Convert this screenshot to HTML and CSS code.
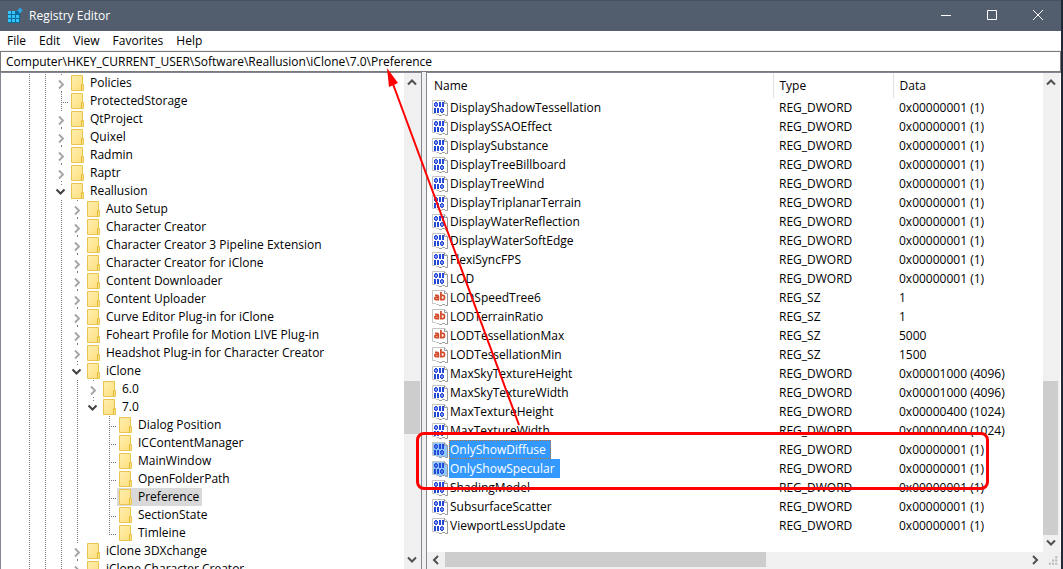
FILE: index.html
```html
<!DOCTYPE html>
<html lang="en">
<head>
<meta charset="utf-8">
<title>Registry Editor</title>
<link rel="stylesheet" href="styles.css">
</head>
<body>
<svg class="defs" aria-hidden="true">
  <defs>
    <linearGradient id="fold" x1="0" y1="0" x2="1" y2="1"><stop offset="0" stop-color="#ffeeb0"/><stop offset="1" stop-color="#fddf7c"/></linearGradient>
    <symbol id="folder" viewBox="0 0 13 16"><path d="M.5.5h11v9h1v6H.5z" fill="url(#fold)" stroke="#ebc44d"/><path d="M10.500 15V9.500h1.500" fill="none" stroke="#e2b93c"/></symbol>
    <symbol id="right" viewBox="0 0 16 18"><path d="M6 6.500l4 4-4 4" fill="none" stroke="#a3a3a3" stroke-width="1.800"/><path d="M8 0h1v1H8zM8 17h1v1H8z" fill="#777"/></symbol>
    <symbol id="down" viewBox="0 0 16 18"><path d="M3.500 7.500l4 4 4-4" fill="none" stroke="#404040" stroke-width="2"/><path d="M8 2h1v1H8z" fill="#777"/></symbol>
    <symbol id="page" viewBox="0 0 16 16"><path class="sheet" d="M.5.5h12l3 3v12h-2l-1-1h-2l-1 1h-2l-1-1h-2l-1-1h-3z" stroke="#c4c4c4"/><path d="M12.500.5v3h3M15.500 4v11.500h-2l-1-1h-2l-1 1h-2l-1-1" fill="none" stroke="#999"/></symbol>
    <symbol id="bin" viewBox="0 0 16 16"><use href="#page"/><path d="M3 3h2v1h1v3H5v1H3V7H2V4h1zM3.500 4.500v2h1v-2zM9 9h2v1h1v3h-1v1H9v-1H8v-3h1zM9.500 10.500v2h1v-2z" transform="translate(0 -1)" fill="#2448d8" fill-rule="evenodd"/><path d="M7 2h2v5H7zM10 2h2v5h-2zM2 8h2v5H2zM5 8h2v5H5z" fill="#2448d8"/></symbol>
    <symbol id="str" viewBox="0 0 16 16"><use href="#page"/><g fill="none" stroke="#d3492a" stroke-width="1.700"><path d="M3 5.300h2.200q1.200 0 1.200 1.200V10.500M6.400 7.300H4q-1.200 0-1.200 1.200T4 9.700h2.400M8.900 2v8.500M8.900 5.300h2q1.600 0 1.600 2.200t-1.600 2.200h-2"/></g></symbol>
    <symbol id="up-s" viewBox="0 0 16 16"><path d="M4 9.500L8 5.500l4 4" fill="none" stroke="#505050" stroke-width="2"/></symbol>
    <symbol id="down-s" viewBox="0 0 16 16"><path d="M4 5.500l4 4 4-4" fill="none" stroke="#505050" stroke-width="2"/></symbol>
    <symbol id="left-s" viewBox="0 0 16 16"><path d="M10 4L6 8l4 4" fill="none" stroke="#505050" stroke-width="2"/></symbol>
    <symbol id="right-s" viewBox="0 0 16 16"><path d="M6 4l4 4-4 4" fill="none" stroke="#505050" stroke-width="2"/></symbol>
  </defs>
</svg>
<div class="window">
  <header class="titlebar">
    <svg class="app-icon" viewBox="0 0 16 16" aria-hidden="true"><path d="M1 3h12v12H1z" fill="#0a6c9c"/><g fill="#35c4f7"><path d="M1 3h3v3H1zM5 3h3v3H5zM1 7h3v3H1zM5 7h3v3H5zM9 7h3v3H9zM1 11h3v3H1zM5 11h3v3H5zM9 11h3v3H9z"/><path d="M12 0h2v5h-2zM10.500 1.500h5v2h-5z" fill="#2aa5e0"/></g></svg>
    <h1 class="title">Registry Editor</h1>
    <button class="caption" aria-label="Minimize"><svg viewBox="0 0 12 12"><path d="M1 5.500h10"/></svg></button>
    <button class="caption" aria-label="Maximize"><svg viewBox="0 0 12 12"><path d="M1.500 .5h9v9h-9z"/></svg></button>
    <button class="caption" aria-label="Close"><svg viewBox="0 0 12 12"><path d="M1 0l10 10M11 0L1 10"/></svg></button>
  </header>
  <nav class="menubar"><button>File</button><button>Edit</button><button>View</button><button>Favorites</button><button>Help</button></nav>
  <input class="address" type="text" aria-label="Address" value="Computer\HKEY_CURRENT_USER\Software\Reallusion\iClone\7.0\Preference">
  <main class="panes">
    <section class="tree-pane">
      <ul class="tree">
        <li><i class="g"></i><i class="g"></i><button aria-label="Expand"><svg><use href="#right"/></svg></button><span class="key"><svg><use href="#folder"/></svg>Policies</span></li>
        <li><i class="g"></i><i class="g"></i><i class="g elbow"></i><span class="key"><svg><use href="#folder"/></svg>ProtectedStorage</span></li>
        <li><i class="g"></i><i class="g"></i><button aria-label="Expand"><svg><use href="#right"/></svg></button><span class="key"><svg><use href="#folder"/></svg>QtProject</span></li>
        <li><i class="g"></i><i class="g"></i><button aria-label="Expand"><svg><use href="#right"/></svg></button><span class="key"><svg><use href="#folder"/></svg>Quixel</span></li>
        <li><i class="g"></i><i class="g"></i><button aria-label="Expand"><svg><use href="#right"/></svg></button><span class="key"><svg><use href="#folder"/></svg>Radmin</span></li>
        <li><i class="g"></i><i class="g"></i><button aria-label="Expand"><svg><use href="#right"/></svg></button><span class="key"><svg><use href="#folder"/></svg>Raptr</span></li>
        <li><i class="g"></i><i class="g"></i><button aria-label="Collapse"><svg><use href="#down"/></svg></button><span class="key"><svg><use href="#folder"/></svg>Reallusion</span></li>
        <li><i class="g"></i><i class="g"></i><i class="g"></i><button aria-label="Expand"><svg><use href="#right"/></svg></button><span class="key"><svg><use href="#folder"/></svg>Auto Setup</span></li>
        <li><i class="g"></i><i class="g"></i><i class="g"></i><button aria-label="Expand"><svg><use href="#right"/></svg></button><span class="key"><svg><use href="#folder"/></svg>Character Creator</span></li>
        <li><i class="g"></i><i class="g"></i><i class="g"></i><button aria-label="Expand"><svg><use href="#right"/></svg></button><span class="key"><svg><use href="#folder"/></svg>Character Creator 3 Pipeline Extension</span></li>
        <li><i class="g"></i><i class="g"></i><i class="g"></i><button aria-label="Expand"><svg><use href="#right"/></svg></button><span class="key"><svg><use href="#folder"/></svg>Character Creator for iClone</span></li>
        <li><i class="g"></i><i class="g"></i><i class="g"></i><button aria-label="Expand"><svg><use href="#right"/></svg></button><span class="key"><svg><use href="#folder"/></svg>Content Downloader</span></li>
        <li><i class="g"></i><i class="g"></i><i class="g"></i><button aria-label="Expand"><svg><use href="#right"/></svg></button><span class="key"><svg><use href="#folder"/></svg>Content Uploader</span></li>
        <li><i class="g"></i><i class="g"></i><i class="g"></i><button aria-label="Expand"><svg><use href="#right"/></svg></button><span class="key"><svg><use href="#folder"/></svg>Curve Editor Plug-in for iClone</span></li>
        <li><i class="g"></i><i class="g"></i><i class="g"></i><button aria-label="Expand"><svg><use href="#right"/></svg></button><span class="key"><svg><use href="#folder"/></svg>Foheart Profile for Motion LIVE Plug-in</span></li>
        <li><i class="g"></i><i class="g"></i><i class="g"></i><button aria-label="Expand"><svg><use href="#right"/></svg></button><span class="key"><svg><use href="#folder"/></svg>Headshot Plug-in for Character Creator</span></li>
        <li><i class="g"></i><i class="g"></i><i class="g"></i><button aria-label="Collapse"><svg><use href="#down"/></svg></button><span class="key"><svg><use href="#folder"/></svg>iClone</span></li>
        <li><i class="g"></i><i class="g"></i><i class="g"></i><i class="g"></i><button aria-label="Expand"><svg><use href="#right"/></svg></button><span class="key"><svg><use href="#folder"/></svg>6.0</span></li>
        <li><i class="g"></i><i class="g"></i><i class="g"></i><i class="g"></i><button aria-label="Collapse"><svg><use href="#down"/></svg></button><span class="key"><svg><use href="#folder"/></svg>7.0</span></li>
        <li><i class="g"></i><i class="g"></i><i class="g"></i><i class="g"></i><i class="blank"></i><i class="g elbow"></i><span class="key"><svg><use href="#folder"/></svg>Dialog Position</span></li>
        <li><i class="g"></i><i class="g"></i><i class="g"></i><i class="g"></i><i class="blank"></i><i class="g elbow"></i><span class="key"><svg><use href="#folder"/></svg>ICContentManager</span></li>
        <li><i class="g"></i><i class="g"></i><i class="g"></i><i class="g"></i><i class="blank"></i><i class="g elbow"></i><span class="key"><svg><use href="#folder"/></svg>MainWindow</span></li>
        <li><i class="g"></i><i class="g"></i><i class="g"></i><i class="g"></i><i class="blank"></i><i class="g elbow"></i><span class="key"><svg><use href="#folder"/></svg>OpenFolderPath</span></li>
        <li><i class="g"></i><i class="g"></i><i class="g"></i><i class="g"></i><i class="blank"></i><i class="g elbow"></i><span class="key current"><svg><use href="#folder"/></svg>Preference</span></li>
        <li><i class="g"></i><i class="g"></i><i class="g"></i><i class="g"></i><i class="blank"></i><i class="g elbow"></i><span class="key"><svg><use href="#folder"/></svg>SectionState</span></li>
        <li><i class="g"></i><i class="g"></i><i class="g"></i><i class="g"></i><i class="blank"></i><i class="g elbow last"></i><span class="key"><svg><use href="#folder"/></svg>Timleine</span></li>
        <li><i class="g"></i><i class="g"></i><i class="g"></i><button aria-label="Expand"><svg><use href="#right"/></svg></button><span class="key"><svg><use href="#folder"/></svg>iClone 3DXchange</span></li>
        <li><i class="g"></i><i class="g"></i><i class="g"></i><button aria-label="Expand"><svg><use href="#right"/></svg></button><span class="key"><svg><use href="#folder"/></svg>iClone Character Creator</span></li>
      </ul>
      <div class="vbar tree-bar"><button aria-label="Scroll up"><svg><use href="#up-s"/></svg></button><div class="track"><div class="thumb"></div></div><button aria-label="Scroll down"><svg><use href="#down-s"/></svg></button></div>
    </section>
    <section class="list-pane">
      <div class="list">
        <table>
          <colgroup><col class="c-name"><col class="c-type"><col></colgroup>
          <thead><tr><th>Name</th><th>Type</th><th>Data</th></tr></thead>
          <tbody>
            <tr><td><svg><use href="#bin"/></svg><span>DisplayShadowTessellation</span></td><td>REG_DWORD</td><td>0x00000001 (1)</td></tr>
            <tr><td><svg><use href="#bin"/></svg><span>DisplaySSAOEffect</span></td><td>REG_DWORD</td><td>0x00000001 (1)</td></tr>
            <tr><td><svg><use href="#bin"/></svg><span>DisplaySubstance</span></td><td>REG_DWORD</td><td>0x00000001 (1)</td></tr>
            <tr><td><svg><use href="#bin"/></svg><span>DisplayTreeBillboard</span></td><td>REG_DWORD</td><td>0x00000001 (1)</td></tr>
            <tr><td><svg><use href="#bin"/></svg><span>DisplayTreeWind</span></td><td>REG_DWORD</td><td>0x00000001 (1)</td></tr>
            <tr><td><svg><use href="#bin"/></svg><span>DisplayTriplanarTerrain</span></td><td>REG_DWORD</td><td>0x00000001 (1)</td></tr>
            <tr><td><svg><use href="#bin"/></svg><span>DisplayWaterReflection</span></td><td>REG_DWORD</td><td>0x00000001 (1)</td></tr>
            <tr><td><svg><use href="#bin"/></svg><span>DisplayWaterSoftEdge</span></td><td>REG_DWORD</td><td>0x00000001 (1)</td></tr>
            <tr><td><svg><use href="#bin"/></svg><span>FlexiSyncFPS</span></td><td>REG_DWORD</td><td>0x00000001 (1)</td></tr>
            <tr><td><svg><use href="#bin"/></svg><span>LOD</span></td><td>REG_DWORD</td><td>0x00000001 (1)</td></tr>
            <tr><td><svg><use href="#str"/></svg><span>LODSpeedTree6</span></td><td>REG_SZ</td><td>1</td></tr>
            <tr><td><svg><use href="#str"/></svg><span>LODTerrainRatio</span></td><td>REG_SZ</td><td>1</td></tr>
            <tr><td><svg><use href="#str"/></svg><span>LODTessellationMax</span></td><td>REG_SZ</td><td>5000</td></tr>
            <tr><td><svg><use href="#str"/></svg><span>LODTessellationMin</span></td><td>REG_SZ</td><td>1500</td></tr>
            <tr><td><svg><use href="#bin"/></svg><span>MaxSkyTextureHeight</span></td><td>REG_DWORD</td><td>0x00001000 (4096)</td></tr>
            <tr><td><svg><use href="#bin"/></svg><span>MaxSkyTextureWidth</span></td><td>REG_DWORD</td><td>0x00001000 (4096)</td></tr>
            <tr><td><svg><use href="#bin"/></svg><span>MaxTextureHeight</span></td><td>REG_DWORD</td><td>0x00000400 (1024)</td></tr>
            <tr><td><svg><use href="#bin"/></svg><span>MaxTextureWidth</span></td><td>REG_DWORD</td><td>0x00000400 (1024)</td></tr>
            <tr class="selected focused"><td><svg><use href="#bin"/></svg><span>OnlyShowDiffuse</span></td><td>REG_DWORD</td><td>0x00000001 (1)</td></tr>
            <tr class="selected"><td><svg><use href="#bin"/></svg><span>OnlyShowSpecular</span></td><td>REG_DWORD</td><td>0x00000001 (1)</td></tr>
            <tr><td><svg><use href="#bin"/></svg><span>ShadingModel</span></td><td>REG_DWORD</td><td>0x00000001 (1)</td></tr>
            <tr><td><svg><use href="#bin"/></svg><span>SubsurfaceScatter</span></td><td>REG_DWORD</td><td>0x00000001 (1)</td></tr>
            <tr><td><svg><use href="#bin"/></svg><span>ViewportLessUpdate</span></td><td>REG_DWORD</td><td>0x00000001 (1)</td></tr>
          </tbody>
        </table>
      </div>
      <div class="vbar list-bar"><button aria-label="Scroll up"><svg><use href="#up-s"/></svg></button><div class="track"><div class="thumb"></div></div><button aria-label="Scroll down"><svg><use href="#down-s"/></svg></button></div>
      <div class="hbar"><button aria-label="Scroll left"><svg><use href="#left-s"/></svg></button><div class="track"><div class="thumb"></div></div><button aria-label="Scroll right"><svg><use href="#right-s"/></svg></button></div>
      <svg class="grip" viewBox="0 0 16 16" aria-hidden="true"><path d="M11 4h2v2h-2zM8 7h2v2H8zM11 7h2v2h-2zM5 10h2v2H5zM8 10h2v2H8zM11 10h2v2h-2z" fill="#bbb"/></svg>
    </section>
  </main>
</div>
<svg class="arrow" viewBox="0 0 134 358" aria-hidden="true"><path d="M132 357L6 16" stroke="#f00" stroke-width="2"/><path d="M0 0L11 15 2 19z" fill="#f00"/></svg>
<div class="callout"></div>
</body>
</html>
```
FILE: styles.css
```css
* { box-sizing: border-box; }
body {
  margin: 0;
  height: 100vh;
  overflow: hidden;
  position: relative;
  font: 12px/18px "Open Sans", "Noto Sans", sans-serif;
  color: #000;
}
button { border: 0; padding: 0; background: none; font: inherit; color: inherit; }
svg { display: block; flex: none; }
.defs { position: absolute; width: 0; height: 0; }
.window {
  height: 100vh;
  display: flex;
  flex-direction: column;
  background: #fff;
  border-right: 2px solid #202936;
}
.titlebar {
  height: 31px;
  flex: none;
  display: flex;
  align-items: center;
  padding-left: 7px;
  background: #525e6d;
  border-top: 1px solid #465365;
  color: #fff;
}
.app-icon { width: 16px; height: 16px; }
.title { flex: 1; margin: 0; padding-left: 6px; font-size: 12px; font-weight: 400; }
.caption { width: 46px; height: 30px; display: flex; align-items: center; justify-content: center; }
.caption svg { width: 12px; height: 12px; fill: none; stroke: #fff; }
.menubar { height: 20px; flex: none; display: flex; padding-left: 1px; border-bottom: 1px solid #f0f0f0; }
.menubar button { padding: 0 7px 0 6px; }
.address {
  width: 100%;
  height: 21px;
  flex: none;
  border: 1px solid #7a7a7a;
  padding: 0 5px;
  font: inherit;
  color: inherit;
  background: #fff;
}
.panes { flex: 1; min-height: 0; display: flex; background: #f0f0f0; }
.tree-pane {
  flex: 0 0 422px;
  display: flex;
  min-height: 0;
  overflow: hidden;
  background: #fff;
  border: 1px solid #828790;
  border-bottom: 0;
}
.tree { flex: 1; min-width: 0; margin: 0; padding: 1px 0 0 20px; list-style: none; overflow: hidden; }
.tree li { display: flex; height: 18px; white-space: nowrap; }
.tree li > i, .tree button { width: 16px; height: 18px; flex: none; }
.tree button svg { width: 16px; height: 18px; }
.g { background: repeating-linear-gradient(#777 0 1px, transparent 1px 2px) 8px 0 / 1px 18px no-repeat; }
.elbow {
  background:
    repeating-linear-gradient(#777 0 1px, transparent 1px 2px) 8px 0 / 1px 18px no-repeat,
    repeating-linear-gradient(90deg, #777 0 1px, transparent 1px 2px) 8px 10px / 8px 1px no-repeat;
}
.last { background-size: 1px 10px, 8px 1px; }
.key { display: flex; align-items: center; gap: 6px; padding: 0 3px 0 2px; }
.key svg { width: 13px; height: 16px; }
.current { background: #d9d9d9; }
.vbar { width: 17px; display: flex; flex-direction: column; background: #f0f0f0; }
.vbar button, .hbar button { width: 16px; height: 16px; flex: none; }
.vbar button svg, .hbar button svg { width: 16px; height: 16px; }
.track { flex: 1; display: flex; }
.vbar .track { flex-direction: column; }
.thumb { background: #cdcdcd; }
.tree-bar { padding: 2px 1px 1px 0; }
.tree-bar .thumb { margin-top: 290px; height: 53px; }
.list-pane {
  flex: 1;
  min-width: 0;
  margin-left: 4px;
  display: grid;
  grid-template: minmax(0, 1fr) 17px / minmax(0, 1fr) 18px;
  background: #fff;
  border: 1px solid #828790;
  border-right: 0;
  border-bottom: 0;
}
.list { overflow: hidden; padding-left: 1px; }
.list table { width: 100%; table-layout: fixed; border-collapse: collapse; }
.c-name { width: 345px; }
.c-type { width: 120px; }
.list th { height: 25px; padding: 1px 0 0 6px; text-align: left; font-weight: 400; border-right: 1px solid #e0e0e0; }
.list th:last-child { border-right: 0; }
.list td { height: 19px; padding: 0 0 0 6px; white-space: nowrap; }
.list td:first-child { display: flex; align-items: center; padding-left: 4px; }
.list td svg { width: 16px; height: 16px; }
.list td span { margin-left: 1px; padding: 0 5px 0 1px; line-height: 19px; }
.sheet { fill: var(--sheet, #fff); }
.selected { --sheet: #8fc7ff; }
.selected span { background: #3399ff; color: #fff; }
.focused span { outline: 1px dotted #c07030; outline-offset: -1px; }
.list-bar { padding: 2px 2px 1px 0; }
.list-bar .thumb { margin-top: 290px; flex: 1; }
.hbar { display: flex; padding-left: 1px; background: #f0f0f0; }
.hbar .thumb { width: 55%; height: 15px; margin-left: 1px; }
.grip { background: #f0f0f0; width: 18px; height: 17px; }
.arrow { position: absolute; left: 387px; top: 68px; width: 134px; height: 358px; }
.callout {
  position: absolute;
  left: 416px;
  top: 432px;
  width: 573px;
  height: 58px;
  border: 3px solid #f00;
  border-radius: 8px;
}
```
